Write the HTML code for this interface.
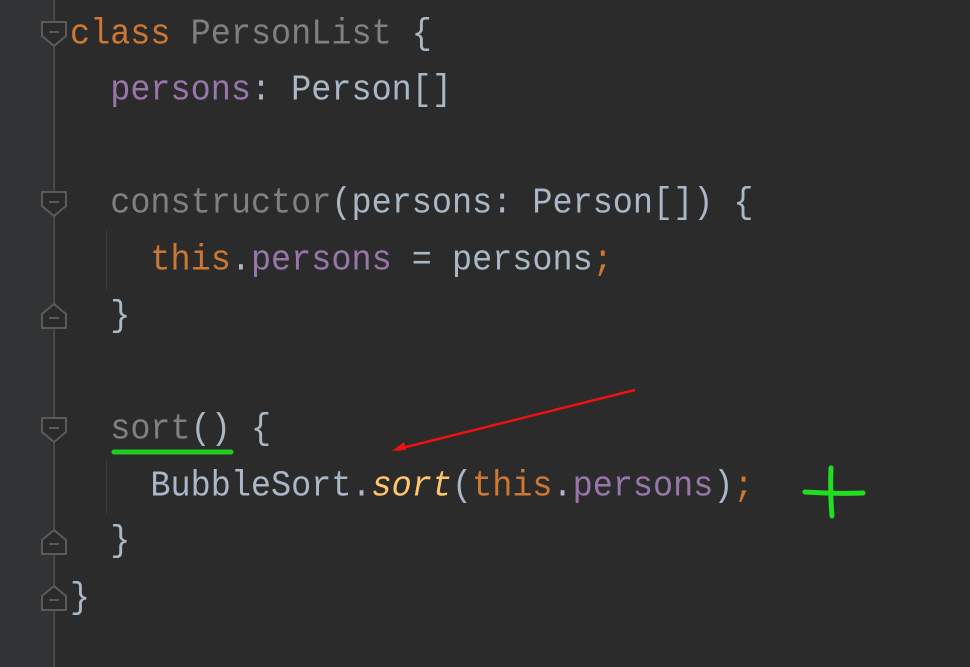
<!DOCTYPE html>
<html><head><meta charset="utf-8"><style>
html,body{margin:0;padding:0;}
body{width:970px;height:667px;background:#2b2b2b;position:relative;overflow:hidden;font-family:"Liberation Mono","DejaVu Sans Mono",monospace;}
.gut{position:absolute;left:0;top:0;width:52px;height:667px;background:#313335;}
.gl{position:absolute;left:53px;top:0;width:2px;height:667px;background:#4a4a4a;}
.ln{position:absolute;left:70px;font-size:33.5px;line-height:40px;white-space:pre;color:#a9b7c6;transform:scaleY(1.08);transform-origin:left center;}
.k{color:#cc7832}.g{color:#808080}.p{color:#9876aa}.f{color:#ffc66d;font-style:italic}
.ig{position:absolute;left:106px;width:1px;background:#3a3a3a;}
</style></head><body>
<div class="gut"></div><div class="gl"></div>
<div class="ig" style="top:230px;height:60px"></div>
<div class="ig" style="top:458px;height:56px"></div>
<svg style="position:absolute;left:0;top:0" width="970" height="667">
<g fill="#2b2b2b" stroke="#5a5a5a" stroke-width="2">
<path d="M42 22h24v14l-12 10l-12-10z"/><path d="M42 192h24v14l-12 10l-12-10z"/><path d="M42 418h24v14l-12 10l-12-10z"/>
<path d="M42 328h24v-14l-12-10l-12 10z"/><path d="M42 554h24v-14l-12-10l-12 10z"/><path d="M42 610h24v-14l-12-10l-12 10z"/>
</g>
<g stroke="#5a5a5a" stroke-width="2"><path d="M49 32h10M49 202h10M49 428h10M49 318h10M49 544h10M49 600h10"/></g>
<path d="M114 452h117" stroke="#22cc22" stroke-width="5" stroke-linecap="round"/>
<path d="M635 390L398 449" stroke="#ee1111" stroke-width="2.5"/>
<path d="M392 451l12-9l2 8z" fill="#ee1111"/>
<path d="M805 492q30 2 58 1M831 468q-1 25 1 48" stroke="#22dd22" stroke-width="5" stroke-linecap="round" fill="none"/>
</svg>
<div class="ln" style="top:15px"><span class="k">class</span> <span class="g">PersonList</span> {</div>
<div class="ln" style="top:71px">  <span class="p">persons</span>: Person[]</div>
<div class="ln" style="top:184px">  <span class="g">constructor</span>(persons: Person[]) {</div>
<div class="ln" style="top:241px">    <span class="k">this</span>.<span class="p">persons</span> = persons<span class="k">;</span></div>
<div class="ln" style="top:297px">  }</div>
<div class="ln" style="top:410px">  <span class="g">sort</span>() {</div>
<div class="ln" style="top:467px">    BubbleSort.<span class="f">sort</span>(<span class="k">this</span>.<span class="p">persons</span>)<span class="k">;</span></div>
<div class="ln" style="top:522px">  }</div>
<div class="ln" style="top:579px">}</div>
</body></html>
